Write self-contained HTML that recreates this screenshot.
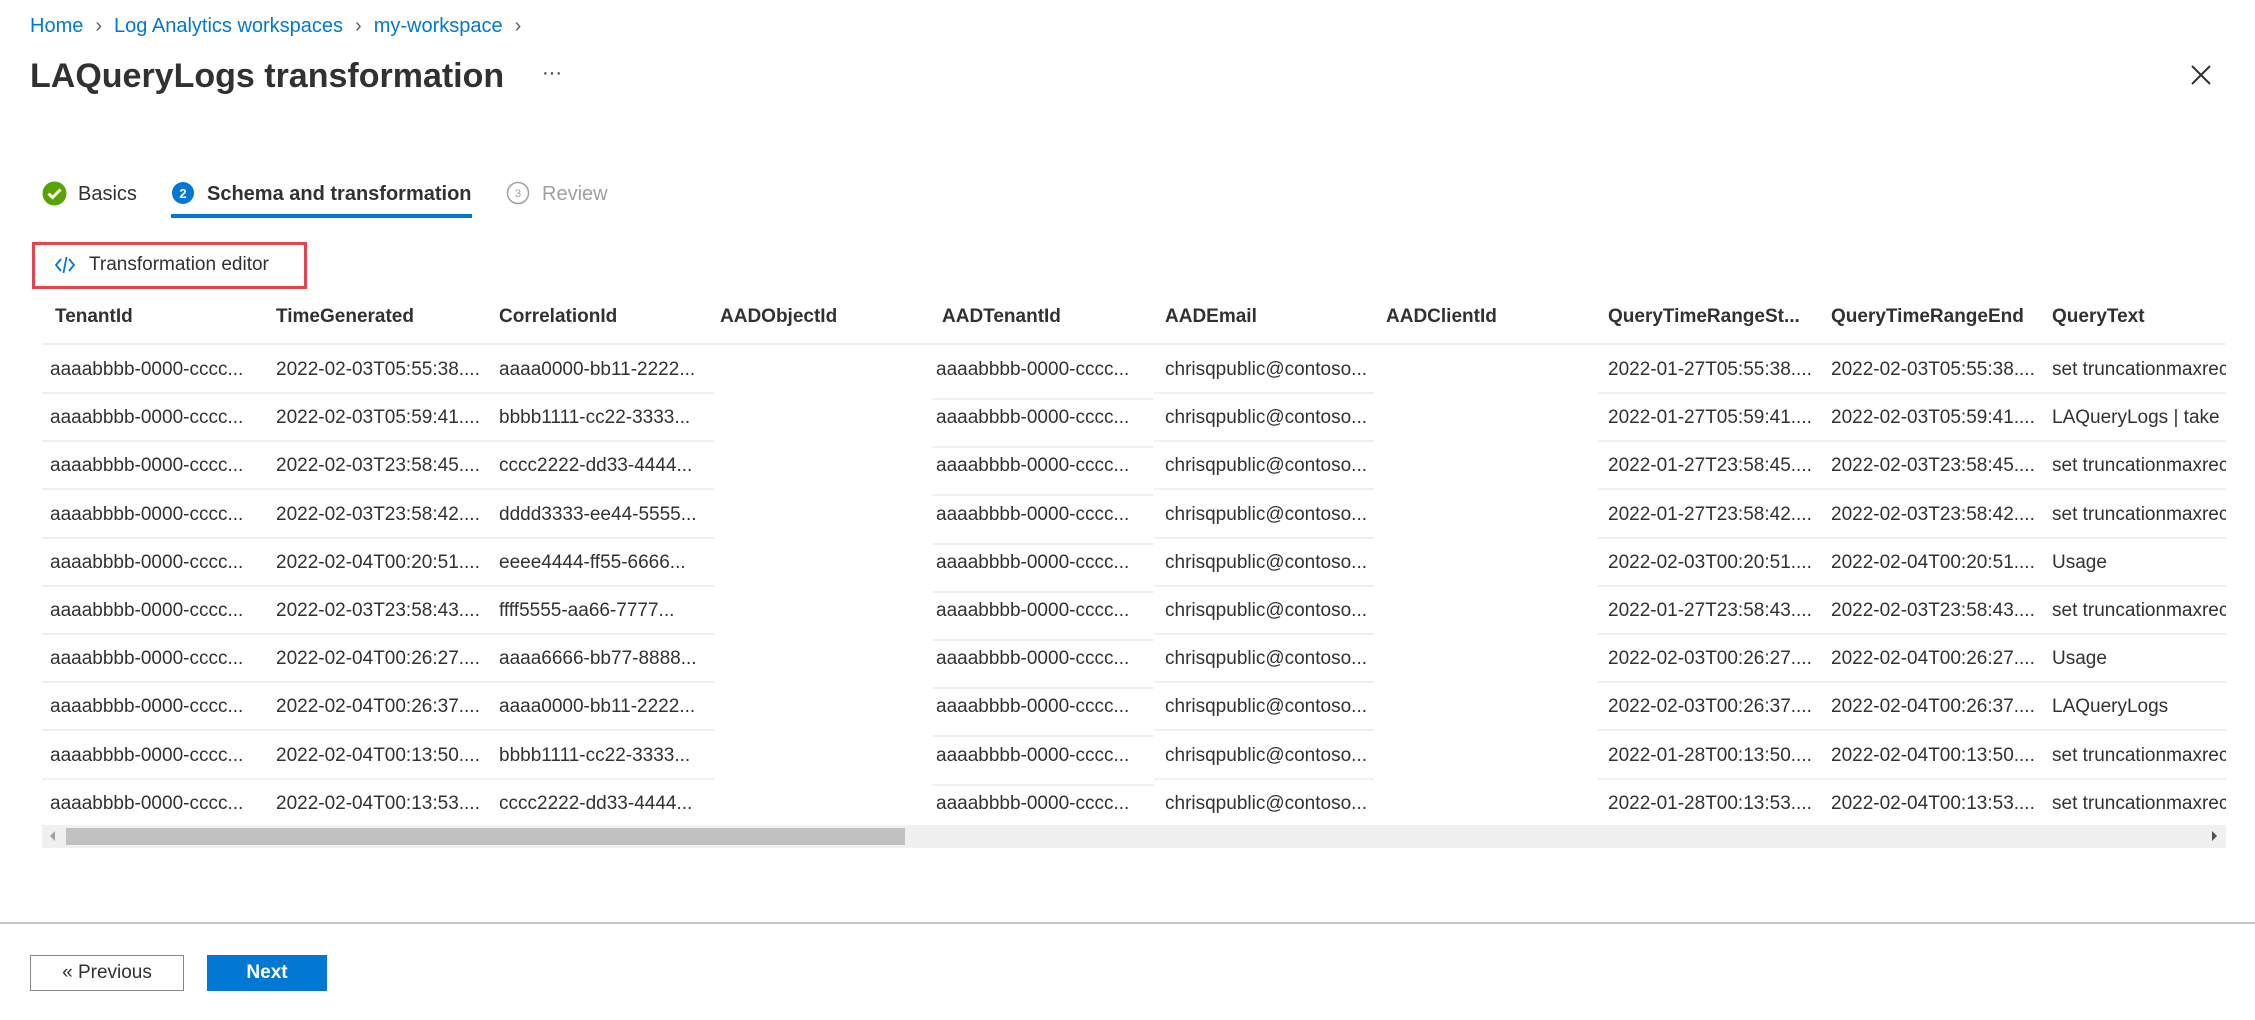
<!DOCTYPE html>
<html><head><meta charset="utf-8"><style>
*{margin:0;padding:0;box-sizing:border-box}
body{width:2255px;height:1020px;background:#fff;font-family:"Liberation Sans",sans-serif;color:#323130;position:relative;overflow:hidden}
.a{position:absolute;white-space:nowrap}
.bc{top:15px;left:30px;font-size:20px;color:#0078d4}
.bc span.s{color:#605e5c;margin:0 12px}
.title{top:57px;left:30px;font-size:34px;font-weight:600;color:#323130}
.cell{position:absolute;width:215px;overflow:hidden;text-overflow:ellipsis;white-space:nowrap;font-size:19px;color:#323130}
.hd{font-weight:600;font-size:19px}
.line{position:absolute;height:2px;background:#f0f0f0}
</style></head><body>
<div class="a bc">Home<span class="s">&#x203A;</span>Log Analytics workspaces<span class="s">&#x203A;</span>my-workspace<span class="s">&#x203A;</span></div>
<div class="a title">LAQueryLogs transformation</div>
<div class="a" style="top:62px;left:542px;font-size:20px">···</div>
<svg class="a" style="left:2190px;top:64px" width="22" height="22" viewBox="0 0 22 22"><path d="M2 2L20 20M20 2L2 20" stroke="#323130" stroke-width="2"/></svg>

<svg class="a" style="left:42px;top:181px" width="25" height="25" viewBox="0 0 25 25"><circle cx="12.5" cy="12.5" r="12" fill="#57a300"/><path d="M6.5 12.5l4 4 8-8" stroke="#fff" stroke-width="3" fill="none"/></svg>
<div class="a" style="left:78px;top:183px;font-size:20px">Basics</div>
<svg class="a" style="left:171px;top:181px" width="24" height="24"><circle cx="12" cy="12" r="11" fill="#0078d4"/><text x="12" y="17" text-anchor="middle" font-size="13" font-weight="700" fill="#fff" font-family="Liberation Sans">2</text></svg>
<div class="a" style="left:207px;top:183px;font-size:20px;font-weight:600">Schema and transformation</div>
<div class="a" style="left:171px;top:214px;width:301px;height:4px;background:#0078d4"></div>
<svg class="a" style="left:506px;top:181px" width="24" height="24"><circle cx="12" cy="12" r="10.5" fill="none" stroke="#a19f9d" stroke-width="1.5"/><text x="12" y="16" text-anchor="middle" font-size="11" fill="#a19f9d" font-family="Liberation Sans">3</text></svg>
<div class="a" style="left:542px;top:183px;font-size:20px;color:#a19f9d">Review</div>

<div class="a" style="left:32px;top:242px;width:275px;height:47px;border:3px solid #e8424a"></div>
<svg class="a" style="left:54px;top:255px" width="22" height="20" viewBox="0 0 22 20"><path d="M7 4L2 10l5 6M15 4l5 6-5 6M12.5 2L9.5 18" stroke="#0078d4" stroke-width="1.8" fill="none"/></svg>
<div class="a" style="left:89px;top:254px;font-size:19px">Transformation editor</div>

<div id="tbl"></div>
<div class="a" style="left:42px;top:825px;width:2184px;height:23px;background:#f0f0f0"></div>
<div class="a" style="left:66px;top:828px;width:839px;height:17px;background:#c1c1c1"></div>
<div class="a" style="left:50px;top:831px;width:0;height:0;border-top:5px solid transparent;border-bottom:5px solid transparent;border-right:5px solid #a0a0a0"></div>
<div class="a" style="left:2212px;top:831px;width:0;height:0;border-top:5px solid transparent;border-bottom:5px solid transparent;border-left:5px solid #505050"></div>

<div class="a" style="left:0;top:922px;width:2255px;height:2px;background:#c8c6c4"></div>
<div class="a" style="left:30px;top:955px;width:154px;height:36px;border:1.5px solid #8a8886;font-size:19px;text-align:center;line-height:33px">« Previous</div>
<div class="a" style="left:207px;top:955px;width:120px;height:36px;background:#0078d4;color:#fff;font-size:19px;font-weight:600;text-align:center;line-height:36px">Next</div>
<script>
var xs=[55,276,499,720,942,1165,1386,1608,1831,2052];
var hd=["TenantId","TimeGenerated","CorrelationId","AADObjectId","AADTenantId","AADEmail","AADClientId","QueryTimeRangeSt...","QueryTimeRangeEnd","QueryText"];
var tg=["03T05:55:38","03T05:59:41","03T23:58:45","03T23:58:42","04T00:20:51","03T23:58:43","04T00:26:27","04T00:26:37","04T00:13:50","04T00:13:53"];
var st=["01-27T05:55:38","01-27T05:59:41","01-27T23:58:45","01-27T23:58:42","02-03T00:20:51","01-27T23:58:43","02-03T00:26:27","02-03T00:26:37","01-28T00:13:50","01-28T00:13:53"];
var co=["aaaa0000-bb11-2222...","bbbb1111-cc22-3333...","cccc2222-dd33-4444...","dddd3333-ee44-5555...","eeee4444-ff55-6666...","ffff5555-aa66-7777...","aaaa6666-bb77-8888...","aaaa0000-bb11-2222...","bbbb1111-cc22-3333...","cccc2222-dd33-4444..."];
var qt=["set truncationmaxrec","LAQueryLogs | take","set truncationmaxrec","set truncationmaxrec","Usage","set truncationmaxrec","Usage","LAQueryLogs","set truncationmaxrec","set truncationmaxrec"];
var h="";
for(var i=0;i<10;i++)h+='<div class="cell hd" style="left:'+xs[i]+'px;top:306px">'+hd[i]+'</div>';
h+='<div class="line" style="left:42px;top:343px;width:2184px"></div>';
for(var r=0;r<10;r++){
 var y=359+r*48.2;
 var v=["aaaabbbb-0000-cccc...","2022-02-"+tg[r]+"....",co[r],"","aaaabbbb-0000-cccc...","chrisqpublic@contoso...","","2022-"+st[r]+"....","2022-02-"+tg[r]+"....",qt[r]];
 for(var c=0;c<10;c++){
  var x=xs[c]-(c==0?5:c==4?6:0);
  h+='<div class="cell" style="left:'+x+'px;top:'+y+'px;'+(c==9?'width:174px;text-overflow:clip':'')+'">'+v[c]+'</div>';
 }
 if(r<9){var ly=356+r*48.2+36;
  h+='<div class="line" style="left:42px;top:'+ly+'px;width:672px"></div>';
  h+='<div class="line" style="left:932px;top:'+(ly+6)+'px;width:222px"></div>';
  h+='<div class="line" style="left:1154px;top:'+ly+'px;width:220px"></div>';
  h+='<div class="line" style="left:1598px;top:'+ly+'px;width:628px"></div>';}
}
document.getElementById("tbl").innerHTML=h;
</script>
</body></html>
